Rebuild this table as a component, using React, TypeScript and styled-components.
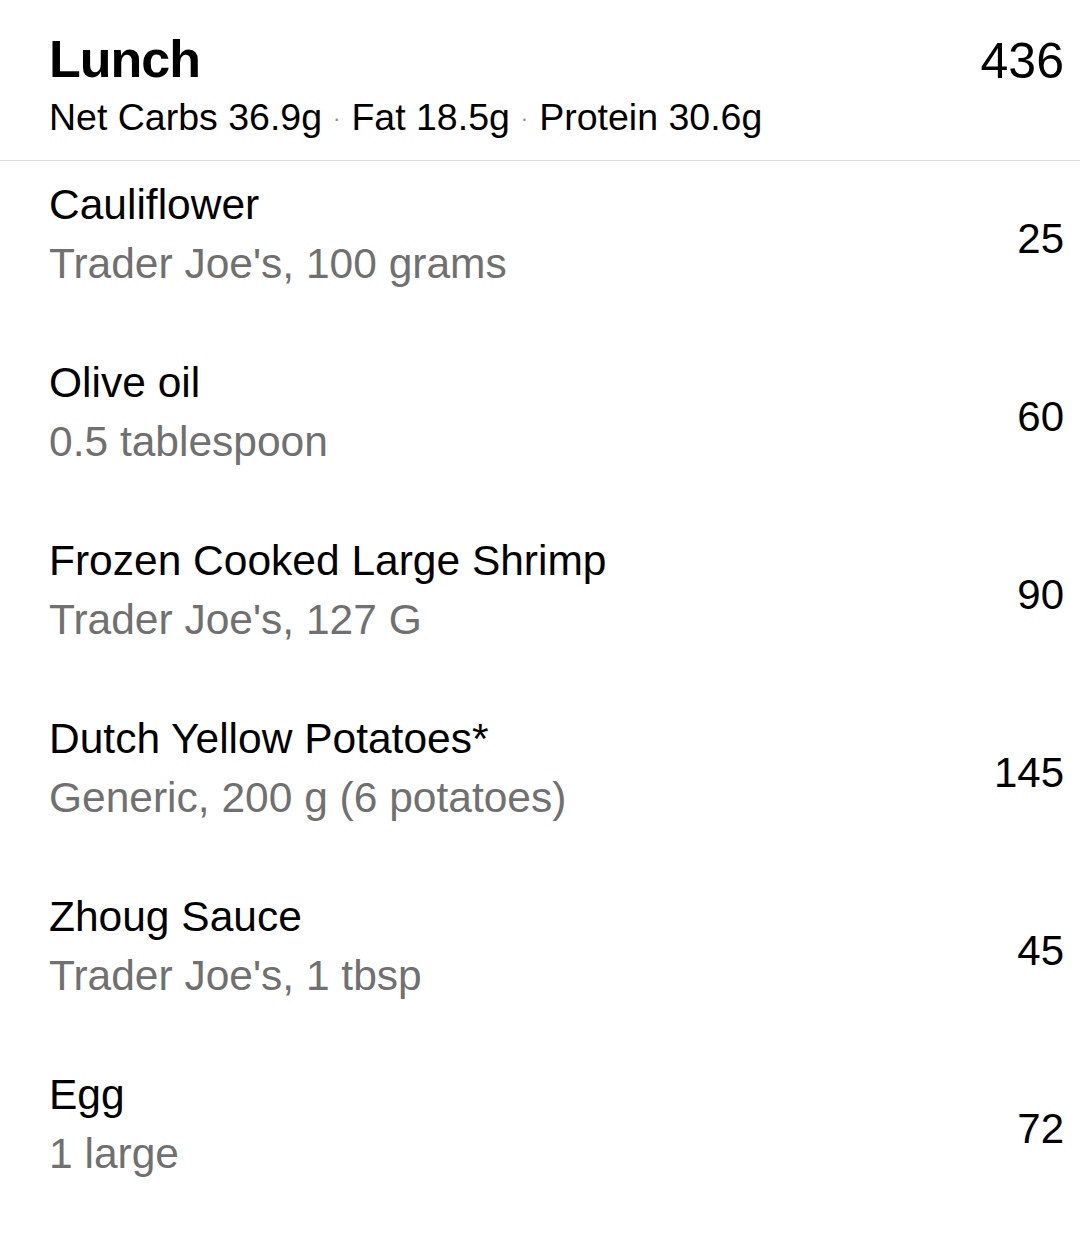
import React from "react";
import styled, { createGlobalStyle } from "styled-components";

const GlobalStyle = createGlobalStyle`
  html, body {
    margin: 0;
    padding: 0;
    background: #ffffff;
  }
  body {
    font-family: "Liberation Sans", Arial, Helvetica, sans-serif;
    color: #000000;
    -webkit-font-smoothing: antialiased;
  }
`;

const Page = styled.div`
  width: 1080px;
  min-height: 1234px;
  background: #ffffff;
`;

const Header = styled.header`
  padding: 29px 16px 15px 49px;
  border-bottom: 1.5px solid #dcdcdc;
`;

const HeaderTop = styled.div`
  display: flex;
  justify-content: space-between;
  align-items: flex-start;
`;

const MealTitle = styled.h1`
  margin: 0;
  font-size: 52px;
  line-height: 60px;
  font-weight: 700;
  letter-spacing: -1px;
`;

const MealTotal = styled.div`
  font-size: 50px;
  line-height: 60px;
  font-weight: 400;
  padding-top: 2px;
`;

const Macros = styled.div`
  margin-top: 4px;
  font-size: 37.5px;
  line-height: 44px;
  display: flex;
  align-items: baseline;
`;

const Dot = styled.span`
  color: #8a8a8a;
  font-size: 22px;
  margin: 0 11px;
  position: relative;
  top: -4px;
`;

const List = styled.div`
  display: flex;
  flex-direction: column;
`;

const Row = styled.div`
  display: flex;
  justify-content: space-between;
  align-items: center;
  height: 178px;
  box-sizing: border-box;
  padding: 14px 16px 46px 49px;
`;

const Info = styled.div`
  display: flex;
  flex-direction: column;
`;

const FoodName = styled.div`
  font-size: 42.5px;
  line-height: 59px;
`;

const FoodDetail = styled.div`
  font-size: 42.5px;
  line-height: 59px;
  color: #707070;
`;

const Calories = styled.div`
  font-size: 42px;
  line-height: 59px;
  padding-top: 8px;
`;

const foods = [
  { name: "Cauliflower", detail: "Trader Joe's, 100 grams", cal: 25 },
  { name: "Olive oil", detail: "0.5 tablespoon", cal: 60 },
  { name: "Frozen Cooked Large Shrimp", detail: "Trader Joe's, 127 G", cal: 90 },
  { name: "Dutch Yellow Potatoes*", detail: "Generic, 200 g (6 potatoes)", cal: 145 },
  { name: "Zhoug Sauce", detail: "Trader Joe's, 1 tbsp", cal: 45 },
  { name: "Egg", detail: "1 large", cal: 72 },
];

export default function App() {
  return (
    <Page>
      <GlobalStyle />
      <Header>
        <HeaderTop>
          <MealTitle>Lunch</MealTitle>
          <MealTotal>436</MealTotal>
        </HeaderTop>
        <Macros>
          <span>Net Carbs 36.9g</span>
          <Dot>·</Dot>
          <span>Fat 18.5g</span>
          <Dot>·</Dot>
          <span>Protein 30.6g</span>
        </Macros>
      </Header>
      <List>
        {foods.map((f) => (
          <Row key={f.name}>
            <Info>
              <FoodName>{f.name}</FoodName>
              <FoodDetail>{f.detail}</FoodDetail>
            </Info>
            <Calories>{f.cal}</Calories>
          </Row>
        ))}
      </List>
    </Page>
  );
}
